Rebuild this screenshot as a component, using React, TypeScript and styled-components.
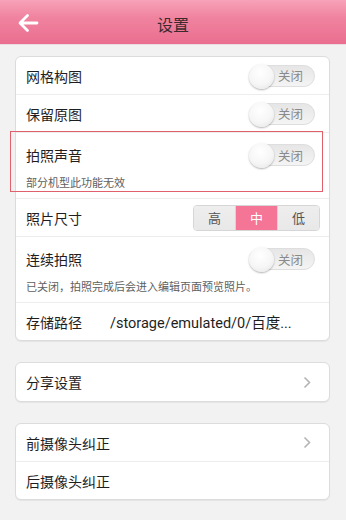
import React from "react";
import styled, { createGlobalStyle } from "styled-components";

const Global = createGlobalStyle`
  html, body { margin: 0; padding: 0; }
  body { font-family: "Noto Sans CJK SC", "Noto Sans", sans-serif; background: #f2f2f2; }
`;

const Page = styled.div`
  width: 346px;
  height: 520px;
  background: #f2f2f2;
  overflow: hidden;
`;

const Header = styled.div`
  height: 44px;
  background: linear-gradient(180deg, #f7a2b8 0%, #f0839f 40%, #ea6e8f 100%);
  display: flex;
  align-items: center;
  position: relative;
  border-bottom: 1px solid #e9dfe2;
`;

const Back = styled.div`
  width: 60px;
  padding-left: 17px;
  padding-top: 2px;
  display: flex;
  align-items: center;
`;

const Title = styled.div`
  position: absolute;
  left: 0;
  right: 0;
  top: 13px;
  text-align: center;
  font-size: 16px;
  line-height: 22px;
  color: #3a2a2e;
  pointer-events: none;
`;

const Body = styled.div`
  padding: 11px 16px 0 15px;
  display: flex;
  flex-direction: column;
  gap: 21px;
`;

const Card = styled.div`
  background: #fff;
  border: 1px solid #dcdcdc;
  border-radius: 6px;
  box-shadow: 0 1px 1px rgba(0, 0, 0, 0.06);
  position: relative;
`;

const Item = styled.div<{ $last?: boolean }>`
  border-bottom: ${(p) => (p.$last ? "none" : "1px solid #ededed")};
  padding: 0 10px;
`;

const Main = styled.div<{ $h?: number }>`
  height: ${(p) => p.$h ?? 37}px;
  display: flex;
  align-items: center;
  justify-content: space-between;
`;

const Label = styled.div`
  font-size: 14px;
  color: #1e1e1e;
`;

const Path = styled.div`
  flex: 1;
  margin-left: 28px;
  font-size: 14.5px;
  color: #1e1e1e;
  font-family: "Roboto", "Noto Sans CJK SC", sans-serif;
`;

const Sub = styled.div`
  font-size: 11px;
  color: #606060;
  padding: 0 0 9px 0;
  margin-top: -2px;
  line-height: 14px;
`;

const Toggle = styled.div`
  width: 66px;
  height: 22px;
  border-radius: 12px;
  background: linear-gradient(180deg, #e6e6e6, #f4f4f4);
  border: 1px solid #dedede;
  margin-right: 4px;
  position: relative;
  display: flex;
  align-items: center;
  justify-content: flex-end;
  padding-right: 11px;
  box-sizing: border-box;
  font-size: 12.5px;
  color: #8a8a8a;
`;

const Knob = styled.div`
  position: absolute;
  left: -1px;
  top: -2px;
  width: 25px;
  height: 25px;
  border-radius: 50%;
  background: radial-gradient(circle at 45% 35%, #ffffff 0%, #f6f6f6 55%, #e2e2e2 100%);
  box-shadow: 0 1px 2px rgba(0, 0, 0, 0.3);
`;

const Seg = styled.div`
  display: flex;
  border: 1px solid #d6d6d6;
  border-radius: 4px;
  overflow: hidden;
  height: 24px;
  margin-right: -1px;
`;

const SegBtn = styled.div<{ $active?: boolean }>`
  width: 41px;
  display: flex;
  align-items: center;
  justify-content: center;
  font-size: 13px;
  color: ${(p) => (p.$active ? "#fff" : "#555")};
  background: ${(p) => (p.$active ? "#f47596" : "linear-gradient(180deg, #eeeeee, #e8e8e8)")};
  & + & {
    border-left: 1px solid #d6d6d6;
  }
`;

const Chevron = styled.div`
  margin-right: 8px;
  display: flex;
  align-items: center;
`;

const Highlight = styled.div`
  position: absolute;
  left: -6px;
  top: 74px;
  width: 313px;
  height: 61px;
  border: 1.5px solid #e0616c;
  box-sizing: border-box;
  pointer-events: none;
`;

const Off = () => (
  <Toggle>
    <Knob />
    关闭
  </Toggle>
);

const Arrow = () => (
  <Chevron>
    <svg width="8" height="13" viewBox="0 0 8 13">
      <path d="M1.5 1.5 L6.5 6.5 L1.5 11.5" fill="none" stroke="#b5b5b5" strokeWidth="1.6" />
    </svg>
  </Chevron>
);

export default function App() {
  return (
    <Page>
      <Global />
      <Header>
        <Back>
          <svg width="22" height="20" viewBox="0 0 22 20">
            <path
              d="M20 10 H3.5 M10.5 2.5 L3 10 L10.5 17.5"
              fill="none"
              stroke="#fff"
              strokeWidth="2.8"
              strokeLinecap="round"
              strokeLinejoin="round"
            />
          </svg>
        </Back>
        <Title>设置</Title>
      </Header>
      <Body>
        <Card>
          <Item>
            <Main>
              <Label>网格构图</Label>
              <Off />
            </Main>
          </Item>
          <Item>
            <Main>
              <Label>保留原图</Label>
              <Off />
            </Main>
          </Item>
          <Item>
            <Main $h={44}>
              <Label>拍照声音</Label>
              <Off />
            </Main>
            <Sub>部分机型此功能无效</Sub>
          </Item>
          <Item>
            <Main>
              <Label>照片尺寸</Label>
              <Seg>
                <SegBtn>高</SegBtn>
                <SegBtn $active>中</SegBtn>
                <SegBtn>低</SegBtn>
              </Seg>
            </Main>
          </Item>
          <Item>
            <Main $h={44}>
              <Label>连续拍照</Label>
              <Off />
            </Main>
            <Sub>已关闭，拍照完成后会进入编辑页面预览照片。</Sub>
          </Item>
          <Item $last>
            <Main>
              <Label>存储路径</Label>
              <Path>/storage/emulated/0/百度...</Path>
            </Main>
          </Item>
          <Highlight />
        </Card>
        <Card>
          <Item $last>
            <Main $h={38}>
              <Label>分享设置</Label>
              <Arrow />
            </Main>
          </Item>
        </Card>
        <Card>
          <Item>
            <Main>
              <Label>前摄像头纠正</Label>
              <Arrow />
            </Main>
          </Item>
          <Item $last>
            <Main>
              <Label>后摄像头纠正</Label>
            </Main>
          </Item>
        </Card>
        <Card>
          <Item $last>
            <Main>
              <Label>&nbsp;</Label>
            </Main>
          </Item>
        </Card>
      </Body>
    </Page>
  );
}
